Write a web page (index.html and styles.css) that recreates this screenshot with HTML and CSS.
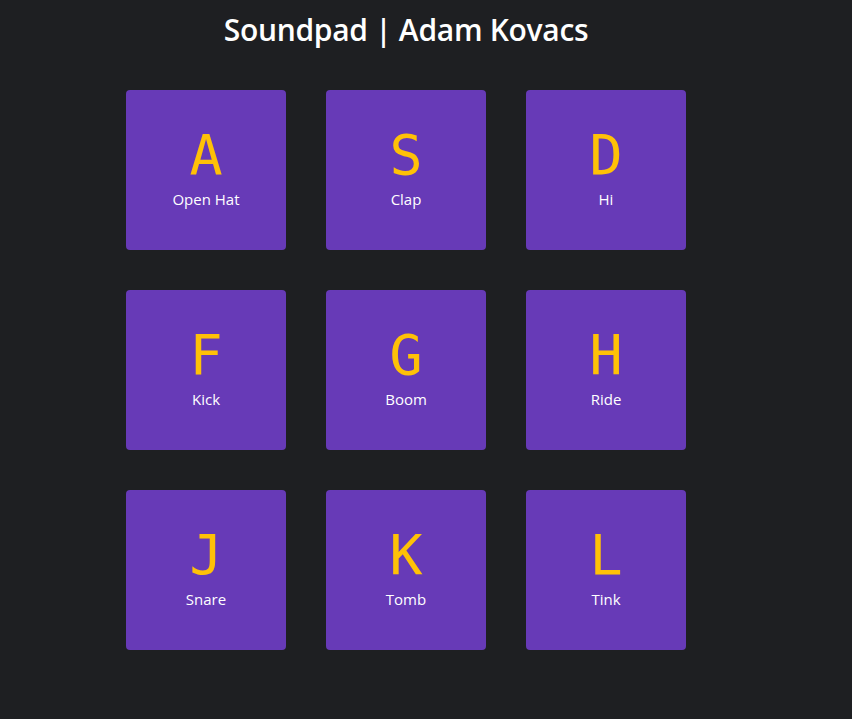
FILE: index.html
```html
<!DOCTYPE html>
<html>
<head>
<meta charset="utf-8">
<link rel="stylesheet" href="styles.css">
</head>
<body>
<main class="app">
  <h1 class="title">Soundpad | Adam Kovacs</h1>
  <div class="pads">
    <div class="pad"><span class="key">A</span><span class="name">Open Hat</span></div>
    <div class="pad"><span class="key">S</span><span class="name">Clap</span></div>
    <div class="pad"><span class="key">D</span><span class="name">Hi</span></div>
    <div class="pad"><span class="key">F</span><span class="name">Kick</span></div>
    <div class="pad"><span class="key">G</span><span class="name">Boom</span></div>
    <div class="pad"><span class="key">H</span><span class="name">Ride</span></div>
    <div class="pad"><span class="key">J</span><span class="name">Snare</span></div>
    <div class="pad"><span class="key">K</span><span class="name">Tomb</span></div>
    <div class="pad"><span class="key">L</span><span class="name">Tink</span></div>
  </div>
</main>
</body>
</html>
```
FILE: styles.css
```css
html, body {
  margin: 0;
  padding: 0;
  background: #1e1f22;
  height: 100%;
}
.app {
  width: 812px;
  display: flex;
  flex-direction: column;
  align-items: center;
  font-family: "Open Sans", sans-serif;
}
.title {
  margin: 10px 0 0;
  height: 40px;
  line-height: 40px;
  font-size: 30px;
  font-weight: 600;
  color: #ffffff;
  letter-spacing: -0.3px;
}
.pads {
  margin-top: 40px;
  display: grid;
  grid-template-columns: repeat(3, 160px);
  grid-auto-rows: 160px;
  gap: 40px;
}
.pad {
  box-sizing: border-box;
  padding-top: 2px;
  background: #673ab7;
  border-radius: 4px;
  display: flex;
  flex-direction: column;
  align-items: center;
  justify-content: center;
}
.key {
  font-family: "DejaVu Sans Mono", monospace;
  font-size: 55px;
  line-height: 44px;
  margin-top: -1px;
  color: #ffc107;
}
.name {
  font-size: 15px;
  line-height: 20px;
  color: #ffffff;
  margin-top: 12px;
}
```
